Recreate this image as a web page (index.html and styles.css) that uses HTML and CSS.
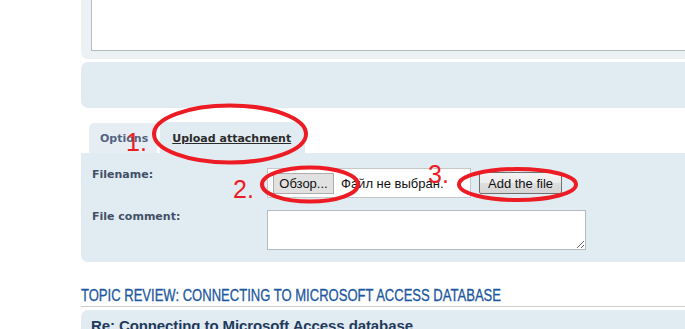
FILE: index.html
```html
<!DOCTYPE html>
<html lang="en">
<head>
    <meta charset="UTF-8">
    <title>Post a reply</title>
    <link rel="stylesheet" href="styles.css">
</head>
<body>
    <div class="page">
        <div class="panel panel-editor">
            <textarea class="message"></textarea>
        </div>

        <div class="panel panel-bar"></div>

        <div class="tabs">
            <div class="tab">Options</div>
            <div class="tab active"><span>Upload attachment</span></div>
        </div>

        <div class="panel panel-upload">
            <div class="row">
                <div class="label">Filename:</div>
                <div class="file-box">
                    <span class="browse">Обзор...</span>
                    <span class="no-file">Файл не выбран.</span>
                </div>
                <button class="add-file">Add the file</button>
            </div>
            <div class="row">
                <div class="label">File comment:</div>
                <textarea class="comment"></textarea>
            </div>
        </div>

        <h3 class="review-title"><span>Topic review: Connecting to Microsoft Access database</span></h3>

        <div class="panel post">
            <h4 class="post-title">Re: Connecting to Microsoft Access database</h4>
        </div>
    </div>

    <!-- red marks drawn over the screenshot -->
    <svg class="marks" width="685" height="329" viewBox="0 0 685 329">
        <ellipse cx="230" cy="134" rx="76" ry="28.5"/>
        <ellipse cx="310" cy="184.5" rx="48" ry="17"/>
        <ellipse cx="517.5" cy="184.5" rx="58.5" ry="15.5"/>
        <text x="126" y="151" font-size="25">1.</text>
        <text x="233" y="198" font-size="25">2.</text>
        <text x="428" y="183" font-size="25">3.</text>
    </svg>
</body>
</html>
```

FILE: styles.css
```css
* {
    margin: 0;
    padding: 0;
    box-sizing: border-box;
}

html, body {
    overflow: hidden;
}

body {
    background: #fff;
    font-family: 'DejaVu Sans', Verdana, sans-serif;
    font-size: 11px;
    height: 329px;
    position: relative;
}

.page {
    margin-left: 81px;
    width: 640px;
}

.panel {
    background: #e1ebf2;
    border-radius: 7px;
}

.panel-editor {
    background: #ecf1f3;
    margin-top: -40px;
    padding: 10px 0 8px 10px;
    border-radius: 0 0 7px 7px;
}

.message {
    display: block;
    width: 100%;
    height: 81px;
    border: 1px solid #b4bac0;
    background: #fff;
    resize: none;
}

.panel-bar {
    margin-top: 3px;
    height: 46px;
}

/* tabs */
.tabs {
    display: flex;
    align-items: flex-end;
    gap: 3px;
    margin-top: 14px;
    padding-left: 8px;
}

.tab {
    font-weight: bold;
    line-height: 13px;
    color: #536482;
    background: #e7eef3;
    border-radius: 5px 5px 0 0;
    padding: 9px 9px 8px 11px;
}

.tab.active {
    background: #e1ebf2;
    color: #2b2b2b;
    padding: 10px 14px 8px 12px;
}

.tab.active span {
    text-decoration: underline;
}

.panel-upload {
    border-radius: 0 7px 7px 7px;
    padding: 15px 0 12px 11px;
}

.row {
    display: flex;
    align-items: flex-start;
}

.row + .row {
    margin-top: 12px;
}

.label {
    width: 175px;
    flex-shrink: 0;
    font-weight: bold;
    line-height: 14px;
    color: #425067;
}

.file-box {
    width: 204px;
    height: 30px;
    background: #fff;
    border: 1px solid #c6c6c6;
    display: flex;
    align-items: center;
    padding-left: 5px;
    gap: 7px;
    font-family: 'Liberation Sans', Arial, sans-serif;
    font-size: 13px;
    color: #111;
}

.browse {
    width: 61px;
    height: 21px;
    line-height: 19px;
    text-align: center;
    background: #e1e1e1;
    border: 1px solid #adadad;
}

.add-file {
    margin: 4px 0 0 8px;
    height: 22px;
    padding: 0 8px;
    font-family: 'Liberation Sans', Arial, sans-serif;
    font-size: 13px;
    color: #111;
    background: linear-gradient(#f3f3f3, #ececec 50%, #dedede 50%, #d6d6d6);
    border: 1px solid #707070;
    border-radius: 2px;
}

.comment {
    width: 319px;
    height: 40px;
    border: 1px solid #b4bac0;
    background: #fff;
}

/* topic review */
.review-title {
    margin-top: 25px;
    padding-bottom: 1px;
    border-bottom: 1px solid #cccccc;
    font-family: 'Liberation Sans', Arial, sans-serif;
    font-size: 16px;
    font-weight: normal;
    line-height: 18px;
    text-transform: uppercase;
    color: #1c57a0;
    white-space: nowrap;
    -webkit-text-stroke: 0.3px #1c57a0;
}

.review-title span {
    display: inline-block;
    transform: scaleX(0.815);
    transform-origin: left center;
}

.post {
    margin-top: 3px;
    border-radius: 7px 7px 0 0;
    padding: 7px 0 0 10px;
    height: 40px;
}

.post-title {
    font-family: 'Liberation Sans', Arial, sans-serif;
    font-size: 15px;
    line-height: 18px;
    color: #1f3a5c;
    white-space: nowrap;
    letter-spacing: -0.1px;
}

/* annotation layer */
.marks {
    position: absolute;
    left: 0;
    top: 0;
    pointer-events: none;
}

.marks ellipse {
    fill: none;
    stroke: #ed1c24;
    stroke-width: 4;
}

.marks text {
    fill: #ed1c24;
    font-family: 'Liberation Sans', Arial, sans-serif;
}
```
